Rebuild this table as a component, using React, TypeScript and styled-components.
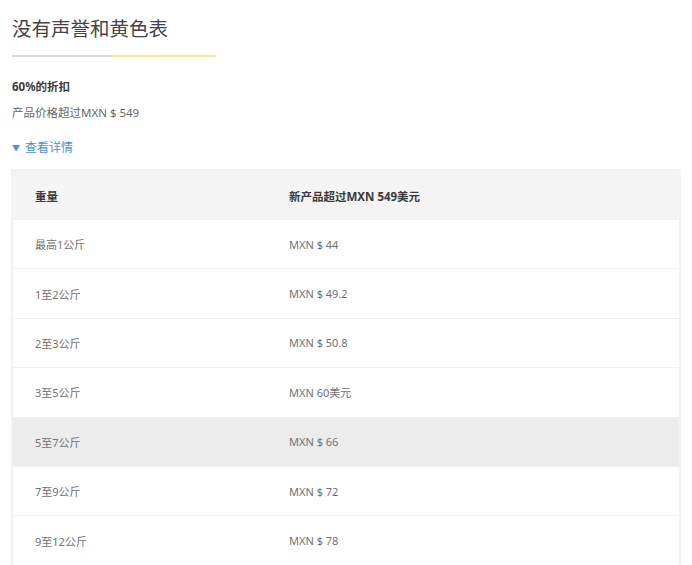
import React from "react";
import styled, { createGlobalStyle } from "styled-components";

const Global = createGlobalStyle`
  html, body { margin: 0; padding: 0; background: #fff; }
  body { font-family: "Noto Sans", "Noto Sans CJK SC", sans-serif; }
`;

const Page = styled.div`
  padding: 14px 11px 0 12px;
  width: 692px;
  box-sizing: border-box;
`;

const Title = styled.h1`
  margin: 0;
  font-size: 19.5px;
  line-height: 28px;
  font-weight: 400;
  color: #444;
  font-family: "Noto Sans CJK SC", sans-serif;
`;

const Divider = styled.div`
  margin-top: 13px;
  width: 204px;
  height: 2px;
  display: flex;
`;

const Seg = styled.div<{ $c: string; $w: number }>`
  width: ${(p) => p.$w}px;
  background: ${(p) => p.$c};
`;

const Discount = styled.div`
  margin-top: 20px;
  font-size: 11.5px;
  line-height: 20px;
  font-weight: 700;
  color: #3a3a3a;
`;

const Price = styled.div`
  margin-top: 6px;
  font-size: 11.5px;
  line-height: 20px;
  color: #666;
`;

const Details = styled.div`
  margin-top: 15px;
  font-size: 12px;
  line-height: 20px;
  color: #4a8fd8;
  display: flex;
  align-items: center;
  gap: 5px;
`;

const Tri = styled.span`
  font-size: 8px;
`;

const Table = styled.div`
  margin-top: 11px;
  margin-left: -1px;
  border: 2px solid #f2f2f2;
  border-bottom: none;
  width: 670px;
  box-sizing: border-box;
`;

const Row = styled.div<{ $bg?: string; $head?: boolean }>`
  display: grid;
  grid-template-columns: 254px 1fr;
  align-items: center;
  height: ${(p) => (p.$head ? "49px" : "49.4px")};
  box-sizing: border-box;
  padding-left: 22px;
  background: ${(p) => p.$bg || "#fff"};
  border-bottom: ${(p) => (p.$head ? "none" : "1.5px solid #f0f0f0")};
  font-size: ${(p) => (p.$head ? "11.5px" : "11px")};
  font-weight: ${(p) => (p.$head ? 700 : 400)};
  color: ${(p) => (p.$head ? "#3a3a3a" : "#707070")};
`;

const rows: [string, string][] = [
  ["最高1公斤", "MXN $ 44"],
  ["1至2公斤", "MXN $ 49.2"],
  ["2至3公斤", "MXN $ 50.8"],
  ["3至5公斤", "MXN 60美元"],
  ["5至7公斤", "MXN $ 66"],
  ["7至9公斤", "MXN $ 72"],
  ["9至12公斤", "MXN $ 78"],
];

export default function App() {
  return (
    <Page>
      <Global />
      <Title>没有声誉和黄色表</Title>
      <Divider>
        <Seg $c="#d8d8d8" $w={100} />
        <Seg $c="#fde98c" $w={104} />
      </Divider>
      <Discount>60%的折扣</Discount>
      <Price>产品价格超过MXN $ 549</Price>
      <Details>
        <Tri>▼</Tri>
        <span>查看详情</span>
      </Details>
      <Table>
        <Row $head $bg="#f4f4f4">
          <span>重量</span>
          <span>新产品超过MXN 549美元</span>
        </Row>
        {rows.map(([w, p], i) => (
          <Row key={w} $bg={i === 4 ? "#ececec" : undefined}>
            <span>{w}</span>
            <span>{p}</span>
          </Row>
        ))}
      </Table>
    </Page>
  );
}
